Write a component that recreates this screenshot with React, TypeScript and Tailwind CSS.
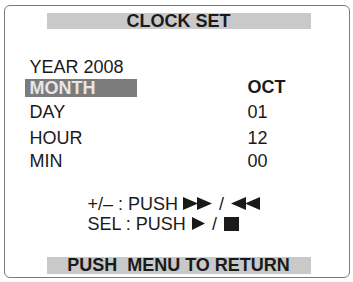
import React from "react";

const font = { fontFamily: '"Liberation Sans", Arial, sans-serif' };

function Fwd() {
  return (
    <svg width="29" height="13" viewBox="0 0 29 13" className="inline-block">
      <polygon points="0,0 15,6.5 0,13" fill="#1a1a1a" />
      <polygon points="14,0 29,6.5 14,13" fill="#1a1a1a" />
    </svg>
  );
}

function Rew() {
  return (
    <svg width="29" height="13" viewBox="0 0 29 13" className="inline-block">
      <polygon points="15,0 0,6.5 15,13" fill="#1a1a1a" />
      <polygon points="29,0 14,6.5 29,13" fill="#1a1a1a" />
    </svg>
  );
}

function Play() {
  return (
    <svg width="13" height="13" viewBox="0 0 13 13" className="inline-block">
      <polygon points="0,0 13,6.5 0,13" fill="#1a1a1a" />
    </svg>
  );
}

function Stop() {
  return <span className="inline-block h-[14px] w-[15px] bg-[#1a1a1a]" />;
}

const rows = [
  { label: "DAY", value: "01", h: "h-[26px]" },
  { label: "HOUR", value: "12", h: "h-[23px]" },
  { label: "MIN", value: "00", h: "h-[23px]" },
];

export default function App() {
  return (
    <div className="h-[282px] w-[353px] bg-white pl-[4px] pt-[5px] text-[#1a1a1a]" style={font}>
      <div className="flex h-[273px] w-[346px] flex-col rounded-[6px] border-[1.5px] border-[#7a7a7a]">
        {/* title */}
        <div className="ml-[41.5px] mt-[6.5px] flex h-[16px] w-[264px] items-center justify-center bg-[#c9c9c9] text-[18px] font-bold leading-[16px]">
          CLOCK SET
        </div>

        <div className="mt-[27px] pl-[24.5px] text-[18px]">
          <div className="h-[23px] leading-[22px]">YEAR 2008</div>
          <div className="flex h-[18px] items-center">
            <div className="w-[218px]">
              <div className="-ml-[5px] h-[18px] w-[112px] bg-[#7b7b7b] pl-[5px] font-bold leading-[19px] text-[#e6e6e6]">
                MONTH
              </div>
            </div>
            <div className="font-bold leading-[19px]">OCT</div>
          </div>
          <div className="mt-[4px]">
            {rows.map((r) => (
              <div key={r.label} className={`flex ${r.h} leading-[22px]`}>
                <div className="w-[218px]">{r.label}</div>
                <div>{r.value}</div>
              </div>
            ))}
          </div>
        </div>

        <div className="mt-[21px] pl-[82.5px] text-[18px] leading-[20px]">
          <div className="flex h-[20px] items-center gap-[5px]">
            <span>+/– : PUSH</span>
            <Fwd />
            <span className="px-[2px]">/</span>
            <Rew />
          </div>
          <div className="flex h-[20px] items-center gap-[6px]">
            <span>SEL : PUSH</span>
            <Play />
            <span className="px-[1px]">/</span>
            <Stop />
          </div>
        </div>

        <div className="ml-[41.5px] mt-auto mb-[3px] flex h-[17px] w-[264px] items-center justify-center bg-[#c9c9c9] text-[18px] font-bold leading-[17px]">
          PUSH&nbsp;&nbsp;MENU TO RETURN
        </div>
      </div>
    </div>
  );
}
